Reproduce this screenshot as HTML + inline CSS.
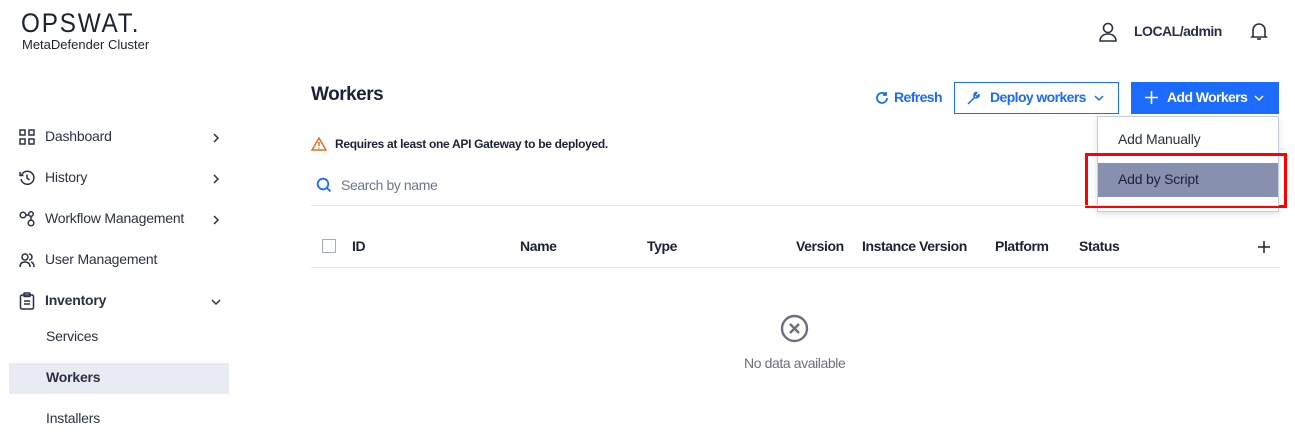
<!DOCTYPE html>
<html><head><meta charset="utf-8"><style>
*{margin:0;padding:0;box-sizing:border-box}
body{width:1295px;height:440px;overflow:hidden;background:#fff;font-family:"Liberation Sans",sans-serif;color:#1b2236;font-size:14px;position:relative;letter-spacing:-0.2px}
.a{position:absolute;white-space:nowrap}
.nav{position:absolute;left:45px;font-size:14px;color:#2a3147}
.ic{position:absolute;left:19px}
.chev{position:absolute;left:210px}
.th{position:absolute;top:238px;font-weight:bold;font-size:14px;letter-spacing:-0.4px}
</style></head><body>
<div class="a" style="left:21px;top:8px;font-size:27px;letter-spacing:2px;font-weight:300;color:#1b2236;transform:scaleX(0.9);transform-origin:left">OPSWAT.</div>
<div class="a" style="left:22px;top:37px;font-size:13px;color:#1b2236;letter-spacing:0">MetaDefender Cluster</div>

<svg class="a" style="left:1098px;top:21px" width="20" height="22" viewBox="0 0 20 22" fill="none" stroke="#2a3147" stroke-width="1.6"><circle cx="10" cy="7" r="4.5"/><path d="M2 20c0-5 4-7 8-7s8 2 8 7z"/></svg>
<div class="a" style="left:1134px;top:23px;font-size:14px;font-weight:bold;color:#2a3147;letter-spacing:-0.5px">LOCAL/admin</div>
<svg class="a" style="left:1250px;top:21px" width="18" height="20" viewBox="0 0 18 20" fill="none" stroke="#2a3147" stroke-width="1.6"><path d="M3 15V9a6 6 0 0 1 12 0v6l1 1H2z"/><path d="M7 18h4"/></svg>

<!-- sidebar -->
<svg class="ic" style="top:129px" width="16" height="16" viewBox="0 0 16 16" fill="none" stroke="#2a3147" stroke-width="1.5"><rect x="1" y="1" width="5" height="5"/><rect x="10" y="1" width="5" height="5"/><rect x="1" y="10" width="5" height="5"/><rect x="10" y="10" width="5" height="5"/></svg>
<div class="nav" style="top:128px">Dashboard</div>
<svg class="ic" style="top:170px" width="16" height="16" viewBox="0 0 16 16" fill="none" stroke="#2a3147" stroke-width="1.5"><path d="M2.5 5A6.5 6.5 0 1 1 2 9"/><path d="M1 2v3.5h3.5"/><path d="M8 4.5V8l2.5 2"/></svg>
<div class="nav" style="top:169px">History</div>
<svg class="ic" style="top:210px" width="16" height="18" viewBox="0 0 16 18" fill="none" stroke="#2a3147" stroke-width="1.5"><circle cx="4" cy="5" r="2.8"/><circle cx="12" cy="4" r="2.3"/><circle cx="12" cy="13" r="2.8"/><path d="M7 5h2.5M12 6.5v3.5"/></svg>
<div class="nav" style="top:210px">Workflow Management</div>
<svg class="ic" style="top:252px" width="16" height="16" viewBox="0 0 16 16" fill="none" stroke="#2a3147" stroke-width="1.5"><circle cx="6" cy="5" r="3"/><path d="M1 15c0-4 2.5-5 5-5s5 1 5 5"/><path d="M10 2a3 3 0 0 1 0 6M12 10c2 .5 3 2 3 5"/></svg>
<div class="nav" style="top:251px">User Management</div>
<svg class="ic" style="top:292px" width="16" height="18" viewBox="0 0 16 18" fill="none" stroke="#2a3147" stroke-width="1.5"><rect x="1.5" y="3" width="13" height="14" rx="1.5"/><rect x="5" y="1" width="6" height="3.5" rx=".5"/><path d="M5 9h6M5 12h6"/></svg>
<div class="nav" style="top:292px;font-weight:bold">Inventory</div>
<svg class="chev" style="top:132px" width="12" height="12" viewBox="0 0 12 12" fill="none" stroke="#2a3147" stroke-width="1.5"><path d="M4 2l4 4-4 4"/></svg>
<svg class="chev" style="top:173px" width="12" height="12" viewBox="0 0 12 12" fill="none" stroke="#2a3147" stroke-width="1.5"><path d="M4 2l4 4-4 4"/></svg>
<svg class="chev" style="top:214px" width="12" height="12" viewBox="0 0 12 12" fill="none" stroke="#2a3147" stroke-width="1.5"><path d="M4 2l4 4-4 4"/></svg>
<svg class="chev" style="top:296px" width="12" height="12" viewBox="0 0 12 12" fill="none" stroke="#2a3147" stroke-width="1.5"><path d="M2 4l4 4 4-4"/></svg>
<div class="nav" style="top:328px;left:46px">Services</div>
<div class="a" style="left:9px;top:363px;width:220px;height:31px;background:#e8ebf2"></div>
<div class="nav" style="top:369px;left:46px;font-weight:bold">Workers</div>
<div class="nav" style="top:410px;left:46px">Installers</div>

<!-- main -->
<div class="a" style="left:311px;top:84px;font-size:19px;font-weight:bold;letter-spacing:-0.5px">Workers</div>
<svg class="a" style="left:875px;top:91px" width="14" height="14" viewBox="0 0 14 14" fill="none" stroke="#1d6bfc" stroke-width="1.8"><path d="M12 7a5 5 0 1 1-1.5-3.6"/><path d="M11 1v3h-3"/></svg>
<div class="a" style="left:894px;top:89px;font-weight:bold;color:#1d6bfc;letter-spacing:-0.6px">Refresh</div>
<div class="a" style="left:954px;top:82px;width:165px;height:32px;border:1px solid #1d6bfc"></div>
<svg class="a" style="left:966px;top:90px" width="16" height="16" viewBox="0 0 16 16" fill="none" stroke="#1d6bfc" stroke-width="1.5" stroke-linejoin="round"><path d="M2 14l6.5-6.5"/><path d="M8.5 7.5a3.5 3.5 0 0 1 1-5l1.5 0-2 2 2 2 2-2 0 1.5a3.5 3.5 0 0 1-4.5 1.5z"/></svg>
<div class="a" style="left:990px;top:89px;font-weight:bold;color:#1d6bfc;letter-spacing:-0.6px">Deploy workers</div>
<svg class="a" style="left:1093px;top:92px" width="12" height="12" viewBox="0 0 12 12" fill="none" stroke="#1d6bfc" stroke-width="1.5"><path d="M2 4l4 4 4-4"/></svg>
<div class="a" style="left:1131px;top:82px;width:148px;height:32px;background:#1d6bfc"></div>
<svg class="a" style="left:1144px;top:90px" width="15" height="15" viewBox="0 0 15 15" stroke="#fff" stroke-width="1.6"><path d="M7.5 1v13M1 7.5h13"/></svg>
<div class="a" style="left:1167px;top:89px;font-weight:bold;color:#fff;letter-spacing:-0.6px">Add Workers</div>
<svg class="a" style="left:1253px;top:92px" width="12" height="12" viewBox="0 0 12 12" fill="none" stroke="#fff" stroke-width="1.5"><path d="M2 4l4 4 4-4"/></svg>

<div class="a" style="left:1097px;top:116px;width:182px;height:96px;background:#fff;border:1px solid #c7cde0;box-shadow:0 2px 6px rgba(0,0,0,.12)"></div>
<div class="a" style="left:1118px;top:131px;color:#2a3147">Add Manually</div>
<div class="a" style="left:1098px;top:163px;width:180px;height:34px;background:#8790ae"></div>
<div class="a" style="left:1118px;top:171px;color:#1b2236">Add by Script</div>
<div class="a" style="left:1085px;top:153px;width:202px;height:55px;border:3px solid #f00"></div>

<svg class="a" style="left:311px;top:137px" width="16" height="14" viewBox="0 0 16 14" fill="none" stroke="#f06a1c" stroke-width="1.5"><path d="M8 1L1 13h14z"/><path d="M8 5v4M8 10.5v1"/></svg>
<div class="a" style="left:335px;top:137px;font-size:12px;font-weight:bold;letter-spacing:-0.3px">Requires at least one API Gateway to be deployed.</div>
<svg class="a" style="left:316px;top:177px" width="16" height="16" viewBox="0 0 16 16" fill="none" stroke="#1d6bfc" stroke-width="1.8"><circle cx="7" cy="7" r="5.3"/><path d="M11 11l3.5 3.5"/></svg>
<div class="a" style="left:341px;top:177px;color:#6b7592;letter-spacing:-0.4px">Search by name</div>
<div class="a" style="left:311px;top:205px;width:968px;height:1px;background:#e3e6ec"></div>

<div class="a" style="left:322px;top:239px;width:14px;height:14px;border:1px solid #a4abbd"></div>
<div class="th" style="left:352px">ID</div>
<div class="th" style="left:520px">Name</div>
<div class="th" style="left:647px">Type</div>
<div class="th" style="left:796px">Version</div>
<div class="th" style="left:862px">Instance Version</div>
<div class="th" style="left:995px">Platform</div>
<div class="th" style="left:1079px">Status</div>
<svg class="a" style="left:1257px;top:240px" width="14" height="14" viewBox="0 0 14 14" stroke="#1b2236" stroke-width="1.5"><path d="M7 1v12M1 7h12"/></svg>
<div class="a" style="left:311px;top:267px;width:968px;height:1px;background:#dde1e8"></div>

<svg class="a" style="left:780px;top:314px" width="29" height="29" viewBox="0 0 29 29" fill="none" stroke="#6b7080" stroke-width="2.4"><circle cx="14.5" cy="14.5" r="12.5"/><path d="M10 10l9 9M19 10l-9 9"/></svg>
<div class="a" style="left:744px;top:355px;color:#6b7080;letter-spacing:-0.4px">No data available</div>
</body></html>
